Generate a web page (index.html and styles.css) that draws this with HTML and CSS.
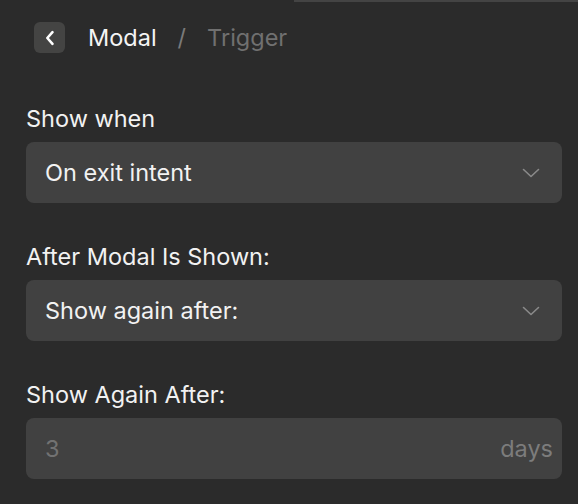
FILE: index.html
```html
<!DOCTYPE html>
<html>
<head>
<meta charset="utf-8">
<link rel="stylesheet" href="styles.css">
</head>
<body>
<div class="topline"></div>
<div class="panel">
  <header class="crumbs">
    <button class="back" aria-label="Back">
      <svg width="12" height="16" viewBox="0 0 12 16"><path d="M8.5 2.2 L3.3 8 L8.5 13.8" fill="none" stroke="#ffffff" stroke-width="2.6" stroke-linecap="round" stroke-linejoin="round"/></svg>
    </button>
    <span class="crumb current">Modal</span>
    <span class="sep">/</span>
    <span class="crumb muted">Trigger</span>
  </header>

  <div class="group">
    <label class="label">Show when</label>
    <div class="field select">
      <span class="value">On exit intent</span>
      <svg class="chev" width="18" height="10" viewBox="0 0 18 10"><path d="M1.5 1.5 L9 8.5 L16.5 1.5" fill="none" stroke="#8a8a8a" stroke-width="1.6" stroke-linecap="round" stroke-linejoin="round"/></svg>
    </div>
  </div>

  <div class="group">
    <label class="label">After Modal Is Shown:</label>
    <div class="field select">
      <span class="value">Show again after:</span>
      <svg class="chev" width="18" height="10" viewBox="0 0 18 10"><path d="M1.5 1.5 L9 8.5 L16.5 1.5" fill="none" stroke="#8a8a8a" stroke-width="1.6" stroke-linecap="round" stroke-linejoin="round"/></svg>
    </div>
  </div>

  <div class="group">
    <label class="label">Show Again After:</label>
    <div class="field input">
      <span class="value placeholder">3</span>
      <span class="unit">days</span>
    </div>
  </div>
</div>
</body>
</html>
```

FILE: styles.css
```css
html, body {
  margin: 0;
  padding: 0;
  background: #2b2b2b;
  font-family: Inter, "Noto Sans", sans-serif;
  color: #f2f2f2;
}
.topline {
  height: 2px;
  margin-left: 294px;
  background: #444444;
}
.panel {
  padding: 20px 16px 0 26px;
}
.crumbs {
  display: flex;
  align-items: center;
  height: 31px;
  margin-left: 8px;
  margin-bottom: 52px;
  font-size: 23.5px;
}
.back {
  width: 31px;
  height: 31px;
  border: 0;
  border-radius: 6px;
  background: #444443;
  display: flex;
  align-items: center;
  justify-content: center;
  padding: 0;
  margin-right: 23px;
}
.crumb.current { color: #f4f4f4; }
.sep { color: #7a7a7a; margin: 0 21px; }
.crumb.muted { color: #707070; }
.group {
  display: flex;
  flex-direction: column;
  margin-bottom: 40px;
}
.label {
  font-size: 23.5px;
  line-height: 28px;
  margin-bottom: 9px;
  color: #f2f2f2;
}
.field {
  height: 61px;
  border-radius: 8px;
  background: #414141;
  display: flex;
  align-items: center;
  box-sizing: border-box;
  font-size: 23.5px;
  line-height: 28px;
}
.select {
  padding: 0 22px 0 19px;
  justify-content: space-between;
}
.input {
  padding: 0 9px 0 19px;
  justify-content: space-between;
}
.placeholder { color: #727272; }
.unit { color: #7c7c7c; }
```
